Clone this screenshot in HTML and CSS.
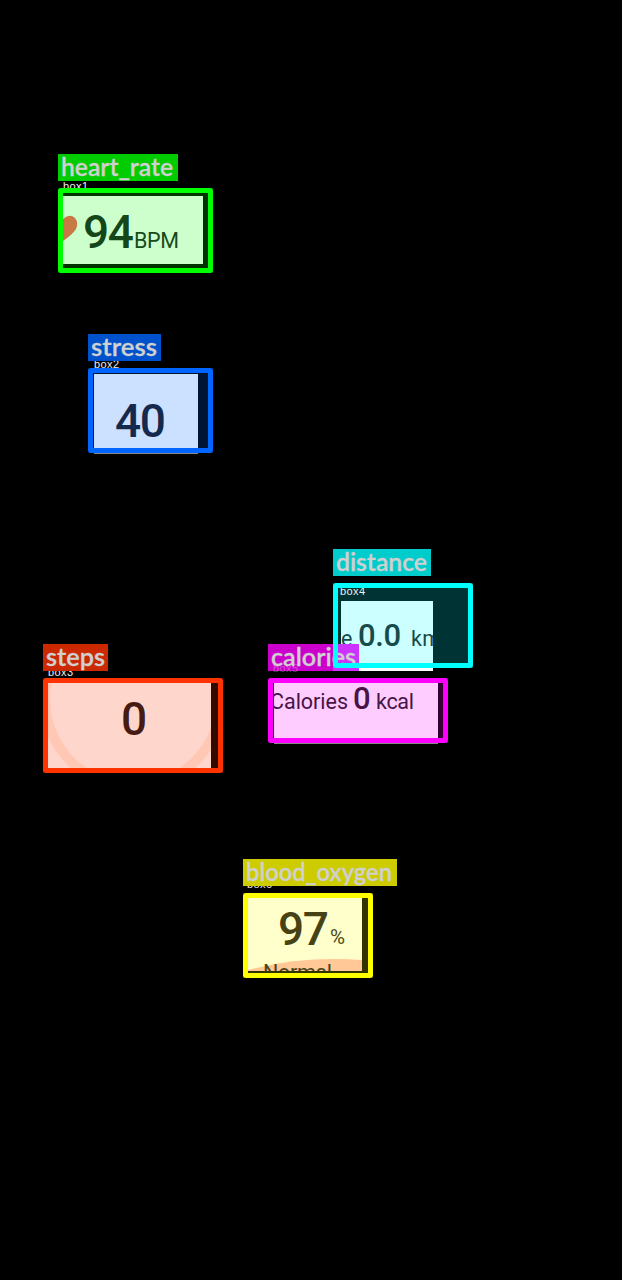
FILE: index.html
```html
<!DOCTYPE html>
<html lang="en">
<head>
<meta charset="utf-8">
<title>Detected regions</title>
<link rel="stylesheet" href="styles.css">
</head>
<body>
<main class="canvas">
  <section class="region heart">
    <div class="tag"><svg class="tag-text"><text x="3" y="22" textLength="112" lengthAdjust="spacingAndGlyphs">heart_rate</text></svg></div>
    <svg class="capture" width="155" height="120" viewBox="58 154 155 120">
      <text class="box-name" x="63" y="190" textLength="25">box1</text>
      <rect x="58" y="188" width="155" height="85" fill="#030"/>
      <rect x="63" y="196" width="140" height="68" fill="#ccffcc"/>
      <path d="M63 219Q70 213 75 218Q79 223 76 229Q73 234 63 241Z" fill="#c87a45"/>
      <text class="value" x="83" y="248" textLength="51" fill="#14461a">94</text>
      <text class="unit" x="134" y="248" textLength="45" fill="#174b1c">BPM</text>
    </svg>
    <div class="frame"></div>
  </section>

  <section class="region stress">
    <div class="tag"><svg class="tag-text"><text x="3" y="22" textLength="66" lengthAdjust="spacingAndGlyphs">stress</text></svg></div>
    <svg class="capture" width="125" height="120" viewBox="88 334 125 120">
      <rect x="88" y="368" width="125" height="85" fill="#001433"/>
      <rect x="94" y="374" width="104" height="77" fill="#cce0ff"/>
      <rect x="94" y="453" width="104" height="1" fill="#888"/>
      <text class="box-name" x="94" y="368" textLength="25">box2</text>
      <text class="value" x="115" y="437" textLength="51" fill="#14294b">40</text>
    </svg>
    <div class="frame"></div>
  </section>

  <section class="region distance">
    <div class="tag"><svg class="tag-text"><text x="3" y="22" textLength="91" lengthAdjust="spacingAndGlyphs">distance</text></svg></div>
    <svg class="capture" width="140" height="122" viewBox="333 549 140 122">
      <clipPath id="distance-clip"><rect x="341" y="601" width="92" height="70"/></clipPath>
      <rect x="333" y="583" width="140" height="85" fill="#033"/>
      <text class="box-name" x="340" y="595" textLength="25">box4</text>
      <rect x="341" y="601" width="92" height="67" fill="#ccffff"/>
      <rect x="341" y="668" width="92" height="3" fill="#fff"/>
      <g clip-path="url(#distance-clip)" fill="#174b4b">
        <text class="unit" x="341" y="646" textLength="12">e</text>
        <text class="small-value" x="358" y="646" textLength="43">0.0</text>
        <text class="unit" x="411" y="646" textLength="30">km</text>
      </g>
    </svg>
  </section>

  <section class="region steps">
    <div class="tag"><svg class="tag-text"><text x="3" y="22" textLength="59" lengthAdjust="spacingAndGlyphs">steps</text></svg></div>
    <svg class="capture" width="180" height="130" viewBox="43 644 180 130">
      <clipPath id="steps-clip"><rect x="48" y="683" width="163" height="85"/></clipPath>
      <text class="box-name" x="48" y="676" textLength="25">box3</text>
      <rect x="43" y="678" width="180" height="95" fill="#330a00"/>
      <rect x="48" y="683" width="163" height="85" fill="#ffd6cc"/>
      <g clip-path="url(#steps-clip)">
        <circle cx="133" cy="699" r="88" fill="none" stroke="#ffc8b5" stroke-width="10"/>
      </g>
      <text class="value" x="121" y="735" textLength="26" fill="#461b14">0</text>
    </svg>
    <div class="frame"></div>
  </section>

  <section class="region calories">
    <div class="tag"><svg class="tag-text"><text x="3" y="22" textLength="85" lengthAdjust="spacingAndGlyphs">calories</text></svg></div>
    <svg class="capture caption" width="180" height="34" viewBox="268 644 180 34">
      <text class="box-name" x="273" y="672" textLength="25">box5</text>
    </svg>
    <svg class="capture" width="180" height="100" viewBox="268 644 180 100">
      <clipPath id="calories-clip"><rect x="273" y="683" width="165" height="56"/></clipPath>
      <rect x="268" y="678" width="180" height="65" fill="#303"/>
      <rect x="274" y="683" width="164" height="56" fill="#ffccff"/>
      <rect x="274" y="743" width="164" height="1" fill="#888"/>
      <g clip-path="url(#calories-clip)" fill="#461446">
        <text class="unit" x="270" y="709" textLength="78">Calories</text>
        <text class="small-value" x="353" y="709" textLength="17">0</text>
        <text class="unit" x="376" y="709" textLength="38">kcal</text>
      </g>
    </svg>
    <div class="frame"></div>
  </section>

  <div class="distance-frame"></div>

  <section class="region oxygen">
    <div class="tag"><svg class="tag-text"><text x="3" y="22" textLength="146" lengthAdjust="spacingAndGlyphs">blood_oxygen</text></svg></div>
    <svg class="capture" width="130" height="120" viewBox="243 859 130 120">
      <clipPath id="oxygen-clip"><rect x="248" y="898" width="114" height="73"/></clipPath>
      <text class="box-name" x="247" y="888" textLength="25">box6</text>
      <rect x="243" y="893" width="130" height="85" fill="#330"/>
      <rect x="248" y="898" width="114" height="73" fill="#ffffcc"/>
      <g clip-path="url(#oxygen-clip)">
        <path d="M248 970Q300 956 362 960V971H248Z" fill="#ffc896"/>
        <text class="unit" x="263" y="980" textLength="69" fill="#4b4517">Normal</text>
      </g>
      <text class="value" x="278" y="945" textLength="51" fill="#464214">97</text>
      <text class="percent" x="330" y="944" textLength="15" lengthAdjust="spacingAndGlyphs" fill="#4b4b17">%</text>
    </svg>
    <div class="frame"></div>
  </section>
</main>
</body>
</html>
```
FILE: styles.css
```css
body { margin: 0; background: #000; }
.canvas { position: relative; width: 622px; height: 1280px; overflow: hidden; font-family: Roboto, sans-serif; }
.region { position: absolute; display: flex; flex-direction: column; gap: 7px; }
.tag { position: relative; z-index: 1; height: 27px; background: var(--tag); }
.tag-text { display: block; width: 100%; height: 27px; overflow: visible; fill: #d0d0d0; stroke: #d0d0d0; stroke-width: .3px; font: 600 24.5px Lato, sans-serif; }
.capture { position: absolute; left: 0; top: 0; overflow: visible; }
.caption { z-index: 2; opacity: .3; }
.frame, .distance-frame { position: relative; box-sizing: border-box; border: 5px solid var(--color); border-radius: 3px; }
.box-name { font: 11px "Liberation Sans", sans-serif; fill: #eee; }
.value { font-size: 46px; font-weight: 500; }
.small-value { font-size: 31px; font-weight: 500; }
.unit { font-size: 21.5px; }
.percent { font-size: 20px; }

.heart { left: 58px; top: 154px; --color: #0f0; --tag: #0c0; }
.heart .tag { width: 120px; }
.heart .frame { width: 155px; height: 85px; }
.stress { left: 88px; top: 334px; --color: #0066ff; --tag: #0052cc; }
.stress .tag { width: 73px; }
.stress .frame { width: 125px; height: 85px; }
.distance { left: 333px; top: 549px; width: 140px; height: 119px; --tag: #0cc; }
.distance .tag { width: 98px; }
.distance-frame { position: absolute; z-index: 3; left: 333px; top: 583px; width: 140px; height: 85px; --color: #0ff; }
.steps { left: 43px; top: 644px; --color: #ff3300; --tag: #cc2900; }
.steps .tag { width: 65px; }
.steps .frame { width: 180px; height: 95px; }
.calories { left: 268px; top: 644px; --color: #f0f; --tag: linear-gradient(90deg, #c0c 65px, #c3f 65px); }
.calories .tag { width: 91px; }
.calories .frame { width: 180px; height: 65px; }
.oxygen { left: 243px; top: 859px; --color: #ff0; --tag: #cc0; }
.oxygen .tag { width: 154px; }
.oxygen .frame { width: 130px; height: 85px; }
```
